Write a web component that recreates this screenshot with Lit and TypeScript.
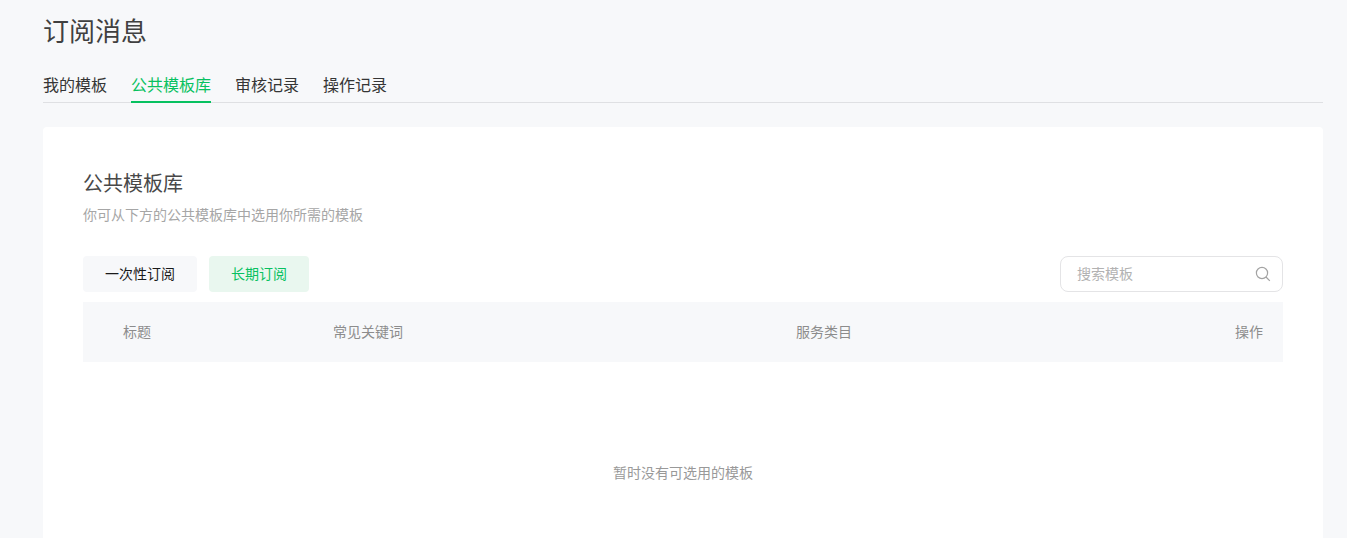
import { LitElement, html, css } from "lit";
import { customElement } from "lit/decorators.js";

@customElement("app-root")
export class AppRoot extends LitElement {
  static styles = css`
    :host {
      display: block;
      height: 538px;
      overflow: hidden;
      background: #f7f8fa;
      font-family: "Noto Sans CJK SC", "Noto Sans", sans-serif;
      color: #353535;
    }
    .page { padding: 0 24px 0 43px; }
    h1 {
      margin: 0;
      padding-top: 11px;
      height: 56px;
      box-sizing: border-box;
      font-size: 26px;
      line-height: 38px;
      font-weight: 400;
      color: #404040;
    }
    .tabs {
      display: flex;
      gap: 24px;
      height: 47px;
      box-sizing: border-box;
      border-bottom: 1px solid #dfe0e3;
    }
    .tab {
      font-size: 16px;
      line-height: 24px;
      padding-top: 16px;
      height: 47px;
      box-sizing: border-box;
    }
    .tab.on { color: #07c160; border-bottom: 2px solid #07c160; }
    .card {
      margin-top: 24px;
      background: #fff;
      border-radius: 4px;
      padding: 40px;
      height: 460px;
      box-sizing: border-box;
    }
    h2 {
      margin: 0;
      font-size: 20px;
      line-height: 32px;
      font-weight: 400;
      color: #484848;
    }
    .sub {
      margin-top: 3px;
      font-size: 14px;
      line-height: 24px;
      color: #a6a6a6;
    }
    .bar {
      display: flex;
      align-items: center;
      gap: 12px;
      margin-top: 30px;
    }
    .btn {
      height: 36px;
      line-height: 34px;
      padding: 0 22px;
      border-radius: 4px;
      font-size: 14px;
      background: #f7f8fa;
      color: #1a1a1a;
    }
    .btn.on { background: #e9f7ef; color: #07c160; }
    .search {
      margin-left: auto;
      width: 223px;
      height: 36px;
      box-sizing: border-box;
      border: 1px solid #e4e4e6;
      border-radius: 8px;
      display: flex;
      align-items: center;
      justify-content: space-between;
      padding: 0 11px 0 16px;
      font-size: 14px;
      line-height: 32px;
      color: #b2b2b2;
    }
    .search span { margin-bottom: 2px; }
    .search svg { display: block; }
    .head {
      margin-top: 10px;
      height: 60px;
      background: #f7f8fa;
      display: grid;
      grid-template-columns: 210px 463px 1fr auto;
      align-items: center;
      padding: 0 20px 2px 40px;
      box-sizing: border-box;
      font-size: 14px;
      color: #8c8c8c;
    }
    .empty {
      margin-top: 99px;
      text-align: center;
      font-size: 14px;
      line-height: 22px;
      color: #999;
    }
  `;

  render() {
    return html`
      <div class="page">
        <h1>订阅消息</h1>
        <div class="tabs">
          <div class="tab">我的模板</div>
          <div class="tab on">公共模板库</div>
          <div class="tab">审核记录</div>
          <div class="tab">操作记录</div>
        </div>
        <div class="card">
          <h2>公共模板库</h2>
          <div class="sub">你可从下方的公共模板库中选用你所需的模板</div>
          <div class="bar">
            <div class="btn">一次性订阅</div>
            <div class="btn on">长期订阅</div>
            <div class="search">
              <span>搜索模板</span>
              <svg width="16" height="16" viewBox="0 0 16 16" fill="none" stroke="#a3a3a3" stroke-width="1.2">
                <circle cx="7" cy="7" r="5.6"></circle>
                <path d="M11 11l3.8 3.8"></path>
              </svg>
            </div>
          </div>
          <div class="head">
            <div>标题</div>
            <div>常见关键词</div>
            <div>服务类目</div>
            <div>操作</div>
          </div>
          <div class="empty">暂时没有可选用的模板</div>
        </div>
      </div>
    `;
  }
}
